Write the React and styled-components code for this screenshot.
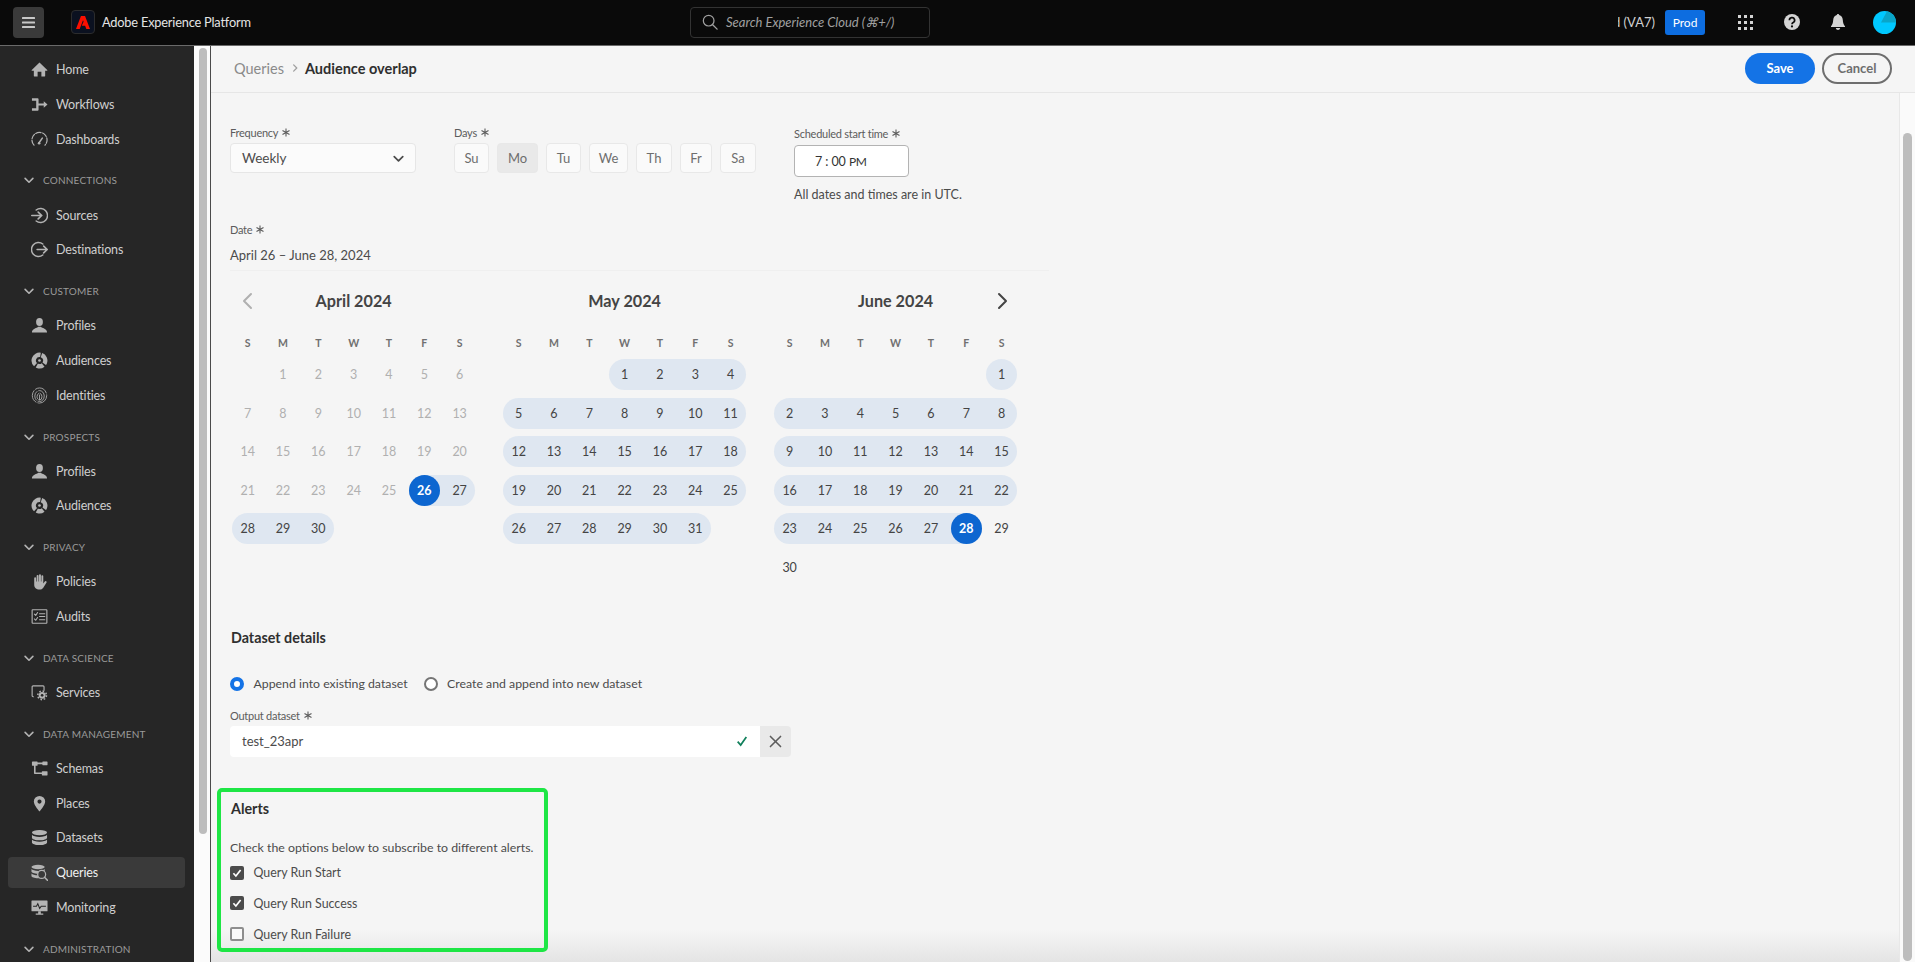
import React from 'react';
import styled, { createGlobalStyle } from 'styled-components';

const GlobalStyle = createGlobalStyle`
  html, body {
    margin: 0;
    padding: 0;
    background: #fff;
    overflow: hidden;
  }
  * { box-sizing: border-box; }
  body {
    font-family: "Lato", "Liberation Sans", sans-serif;
    color: #4b4b4b;
  }
`;

const Shell = styled.div`
  width: 1915px;
  height: 962px;
  display: flex;
  flex-direction: column;
  overflow: hidden;
`;

/* top bar */
const TopBar = styled.header`
  flex: 0 0 46px;
  display: grid;
  grid-template-columns: 690px 240px 1fr;
  align-items: center;
  background: #0a0a0a;
  border-bottom: 1px solid #6a6a6a;
  padding-bottom: 1px;
`;

const TopLeft = styled.div`
  display: flex;
  align-items: center;
  padding-left: 13px;
`;

const MenuButton = styled.div`
  width: 31px;
  height: 31px;
  border-radius: 4px;
  background: #3a3a3a;
  color: #c8c8c8;
  display: flex;
  align-items: center;
  justify-content: center;
`;

const LogoBox = styled.div`
  width: 24px;
  height: 24px;
  margin-left: 27px;
  border-radius: 4px;
  background: #0b1120;
  border: 1px solid #2c2c2c;
  display: flex;
  align-items: center;
  justify-content: center;
`;

const ProductName = styled.span`
  margin-left: 7px;
  font-size: 12.8px;
  letter-spacing: -0.2px;
  color: #e4e4e4;
`;

const SearchBox = styled.div`
  height: 31px;
  display: flex;
  align-items: center;
  gap: 8px;
  padding-left: 11px;
  border: 1px solid #333;
  border-radius: 4px;
  color: #a0a0a0;
  font-size: 13px;
  font-style: italic;
`;

const TopRight = styled.div`
  display: flex;
  align-items: center;
  justify-content: flex-end;
  padding-right: 19px;
  color: #d4d4d4;
`;

const OrgName = styled.span`
  width: 37px;
  display: flex;
  justify-content: flex-end;
  overflow: hidden;
  white-space: nowrap;
  font-size: 13px;
  color: #d0d0d0;
`;

const ProdBadge = styled.span`
  width: 40px;
  height: 25px;
  margin-left: 10px;
  margin-right: 33px;
  border-radius: 3px;
  background: #0d6de0;
  color: #fff;
  font-size: 12px;
  display: flex;
  align-items: center;
  justify-content: center;
`;

const TopIcon = styled.span`
  display: flex;
  margin-right: ${(p) => p.$gap}px;
`;

const Body = styled.div`
  flex: 1;
  display: flex;
  min-height: 0;
`;

/* left navigation */
const Sidebar = styled.nav`
  flex: 0 0 194px;
  display: flex;
  flex-direction: column;
  background: #262626;
  padding-top: 6.4px;
  overflow: hidden;
`;

const NavItem = styled.div`
  flex: 0 0 31px;
  margin: 1.83px 9px 1.82px 8px;
  padding-left: 23px;
  display: flex;
  align-items: center;
  gap: 8px;
  border-radius: 4px;
  font-size: 12.5px;
  letter-spacing: -0.15px;
  color: ${(p) => (p.$active ? '#f0f0f0' : '#cfcfcf')};
  background: ${(p) => (p.$active ? '#3a3a3a' : 'transparent')};
  svg { color: #b3b3b3; flex: none; }
`;

const NavSection = styled.div`
  flex: 0 0 34.65px;
  margin-top: 6.8px;
  padding-left: 24px;
  display: flex;
  align-items: center;
  gap: 9px;
  font-size: 10px;
  letter-spacing: 0.2px;
  text-transform: uppercase;
  color: #9a9a9a;
  svg { color: #b3b3b3; flex: none; }
`;

const NavRail = styled.div`
  flex: 0 0 16px;
  background: #fbfbfb;
  padding: 2px 3px 0 4.5px;
`;

const RailThumb = styled.div`
  height: 786px;
  border-radius: 4px;
  background: #bdbdbd;
`;

const Main = styled.main`
  flex: 1;
  position: relative;
  display: flex;
  flex-direction: column;
  min-width: 0;
  background: #f5f5f5;
  border-left: 1.5px solid #4a4a4a;
`;

const PageHeader = styled.div`
  flex: 0 0 47px;
  display: flex;
  align-items: center;
  padding: 0 23px 2px 23px;
  border-bottom: 1px solid #e6e6e6;
`;

const Crumb = styled.span`
  font-size: 14.5px;
  color: #8a8a8a;
`;

const CrumbArrow = styled.span`
  display: flex;
  color: #a0a0a0;
  margin: 0 6px 0 7px;
`;

const CrumbCurrent = styled.span`
  font-size: 14.5px;
  font-weight: 700;
  color: #2f2f2f;
`;

const HeaderActions = styled.div`
  margin-left: auto;
  display: flex;
  gap: 7px;
`;

const PillButton = styled.button`
  width: 70px;
  height: 31px;
  padding: 0;
  border-radius: 16px;
  font: 700 13px "Lato", "Liberation Sans", sans-serif;
  background: ${(p) => (p.$primary ? '#1473e6' : 'transparent')};
  color: ${(p) => (p.$primary ? '#fff' : '#6e6e6e')};
  border: ${(p) => (p.$primary ? 'none' : '2px solid #6e6e6e')};
`;

const ContentRow = styled.div`
  flex: 1;
  display: flex;
  min-height: 0;
`;

const Content = styled.div`
  flex: 1;
  padding: 32px 0 0 19px;
  min-width: 0;
`;

const ScrollTrack = styled.div`
  flex: 0 0 16px;
  background: #fafafa;
  border-left: 1px solid #e8e8e8;
  padding: 40px 3px 0 3px;
`;

const ScrollThumb = styled.div`
  height: 828px;
  border-radius: 5px;
  background: #bdbdbd;
`;

const BottomFade = styled.div`
  position: absolute;
  left: 0;
  right: 16px;
  bottom: 0;
  height: 32px;
  pointer-events: none;
  background: linear-gradient(to bottom, rgba(228, 228, 228, 0), #e4e4e4);
`;

/* form */
const ScheduleRow = styled.div`
  display: flex;
  height: 97px;
`;

const Field = styled.div`
  flex: 0 0 ${(p) => p.$width}px;
  padding-top: ${(p) => p.$top || 0}px;
`;

const FieldLabel = styled.div`
  height: ${(p) => p.$height || 18}px;
  display: flex;
  align-items: flex-start;
  gap: 4px;
  font-size: 11px;
  letter-spacing: -0.25px;
  line-height: 15px;
  color: #5c5c5c;
`;

const SelectBox = styled.div`
  width: 186px;
  height: 30px;
  padding: 0 11px;
  display: flex;
  align-items: center;
  justify-content: space-between;
  background: #fbfbfb;
  border: 1px solid #e6e6e6;
  border-radius: 4px;
  font-size: 13.5px;
  color: #4b4b4b;
`;

const DayChips = styled.div`
  display: flex;
  gap: 8px;
`;

const DayChip = styled.div`
  width: ${(p) => p.$width}px;
  height: 30px;
  display: flex;
  align-items: center;
  justify-content: center;
  border-radius: 4px;
  border: 1px solid #e8e8e8;
  font-size: 13px;
  color: #6e6e6e;
  background: ${(p) => (p.$selected ? '#e9e9e9' : '#fafafa')};
`;

const TimeBox = styled.div`
  width: 115px;
  height: 32px;
  padding-left: 20px;
  display: flex;
  align-items: center;
  gap: 3px;
  background: #fff;
  border: 1px solid #b3b3b3;
  border-radius: 4px;
  font-size: 12.5px;
  color: #333;
`;

const TimePeriod = styled.span`
  font-size: 12px;
  letter-spacing: -0.3px;
`;

const UtcNote = styled.div`
  margin-top: 9px;
  font-size: 12.5px;
  line-height: 18px;
  color: #4b4b4b;
`;

const DateValue = styled.div`
  width: 819px;
  height: 33px;
  padding-top: 7px;
  border-bottom: 1px solid #efefef;
  font-size: 13px;
  line-height: 20px;
  color: #4b4b4b;
`;

const Months = styled.div`
  display: flex;
  gap: 23.7px;
  margin-top: 16.5px;
`;

const Month = styled.div`
  width: 247.3px;
`;

const MonthHeader = styled.div`
  height: 26px;
  display: grid;
  grid-template-columns: 35.33px 1fr 35.33px;
  align-items: center;
  justify-items: center;
`;

const MonthTitle = styled.div`
  font-size: 16.2px;
  font-weight: 700;
  color: #444;
`;

const MonthArrow = styled.span`
  display: flex;
  color: ${(p) => (p.$muted ? '#b0b0b0' : '#444')};
`;

const Weekdays = styled.div`
  display: grid;
  grid-template-columns: repeat(7, 1fr);
  height: 16px;
  margin: 21.5px 0 8px;
  font-size: 10.5px;
  font-weight: 700;
  line-height: 16px;
  text-align: center;
  color: #707070;
`;

const DayGrid = styled.div`
  display: grid;
  grid-template-columns: repeat(7, 1fr);
  grid-auto-rows: 31px;
  row-gap: 7.5px;
  height: 223.5px;
`;

const Day = styled.div`
  grid-column: ${(p) => p.$col};
  display: flex;
  align-items: center;
  justify-content: center;
  font-size: 12.5px;
  color: ${(p) => (p.$disabled ? '#b0b0b0' : '#444')};
  background: ${(p) => (p.$inRange ? '#dfe7f1' : 'transparent')};
  margin-left: ${(p) => (p.$first ? 2.1 : 0)}px;
  margin-right: ${(p) => (p.$last ? 2.1 : 0)}px;
  padding-left: ${(p) => (p.$last && !p.$first ? 2.1 : 0)}px;
  padding-right: ${(p) => (p.$first && !p.$last ? 2.1 : 0)}px;
  border-radius: ${(p) => (p.$first ? '15.5px' : '0')} ${(p) => (p.$last ? '15.5px 15.5px' : '0 0')} ${(p) => (p.$first ? '15.5px' : '0')};
`;

const SelectedDay = styled.span`
  width: 31px;
  height: 31px;
  border-radius: 50%;
  background: #0d66d0;
  color: #fff;
  display: flex;
  align-items: center;
  justify-content: center;
  font-weight: 700;
`;

const SectionTitle = styled.div`
  font-size: 14.3px;
  font-weight: 700;
  line-height: 20px;
  padding-left: 1px;
  color: #2f2f2f;
`;

const DatasetTitle = styled(SectionTitle)`
  margin-top: 45px;
`;

const RadioRow = styled.div`
  display: flex;
  align-items: center;
  height: 20px;
  margin-top: 26px;
  margin-bottom: 14px;
  font-size: 12.3px;
  color: #4b4b4b;
`;

const RadioDot = styled.span`
  width: 14px;
  height: 14px;
  margin-right: 9.5px;
  border-radius: 50%;
  background: #fff;
  border: ${(p) => (p.$on ? '4.5px solid #1473e6' : '2px solid #757575')};
`;

const RadioText = styled.span`
  margin-right: 16px;
`;

const InputRow = styled.div`
  display: flex;
  width: 561px;
  height: 31px;
  border-radius: 4px;
  overflow: hidden;
`;

const TextInput = styled.div`
  flex: 1;
  display: flex;
  align-items: center;
  justify-content: space-between;
  padding: 0 12px;
  background: #fff;
  font-size: 13px;
  color: #4b4b4b;
`;

const ClearButton = styled.div`
  flex: 0 0 31px;
  display: flex;
  align-items: center;
  justify-content: center;
  background: #e9e9e9;
  color: #5c5c5c;
`;

const AlertsBox = styled.section`
  position: relative;
  z-index: 1;
  width: 331px;
  height: 164px;
  margin: 31px 0 0 -13px;
  padding: 7.5px 0 0 9px;
  border: 4px solid #1ee645;
  border-radius: 5px;
`;

const AlertsHint = styled.div`
  margin: 18.5px 0 5px;
  font-size: 12.35px;
  line-height: 20px;
  color: #4b4b4b;
`;

const CheckRow = styled.div`
  display: flex;
  align-items: center;
  gap: 9.5px;
  height: 20px;
  margin-bottom: 10.9px;
  font-size: 12.4px;
  color: #4b4b4b;
`;

const CheckBox = styled.span`
  width: 14px;
  height: 14px;
  border-radius: 2px;
  display: flex;
  align-items: center;
  justify-content: center;
  color: #fff;
  background: ${(p) => (p.$on ? '#4b4b4b' : '#fafafa')};
  border: ${(p) => (p.$on ? 'none' : '2px solid #8e8e8e')};
`;

/* icons */
const Svg = ({ size = 17, children, ...rest }) => (
  <svg width={size} height={size} viewBox="0 0 18 18" fill="currentColor" {...rest}>
    {children}
  </svg>
);

const strokeProps = { fill: 'none', stroke: 'currentColor', strokeLinecap: 'round', strokeLinejoin: 'round' };

const HomeIcon = () => (
  <Svg><path d="M9 1.6 17.2 9.6c.3.3.1.8-.3.8H15v5.6a.5.5 0 0 1-.5.5H11v-5H7v5H3.5a.5.5 0 0 1-.5-.5v-5.6H1.1c-.4 0-.6-.5-.3-.8z" /></Svg>
);
const WorkflowIcon = () => (
  <Svg><path d="M1 2.5h6a1 1 0 0 1 1 1V8h5.5V5.5L17.5 9l-4 3.5V10H8v4.5a1 1 0 0 1-1 1H1V13h4.5V5H1z" /></Svg>
);
const GaugeIcon = () => (
  <Svg>
    <path d="M3.2 15A8 8 0 1 1 14.8 15" {...strokeProps} strokeWidth="1.3" strokeDasharray="5.5 1.6" />
    <path d="M8.5 12.5 12 7.5" {...strokeProps} strokeWidth="1.6" />
    <circle cx="8.6" cy="13" r="1.4" />
  </Svg>
);
const SourceIcon = () => (
  <Svg>
    <path d="M5.5 3.2A7.4 7.4 0 1 1 5.5 14.8" {...strokeProps} strokeWidth="1.6" />
    <path d="M.8 9H11M7.6 5.4 11.4 9 7.6 12.6" {...strokeProps} strokeWidth="1.7" />
  </Svg>
);
const DestinationIcon = () => (
  <Svg>
    <path d="M12.5 3.2A7.4 7.4 0 1 0 12.5 14.8" {...strokeProps} strokeWidth="1.6" />
    <path d="M6.5 9H17M13.4 5.4 17.2 9 13.4 12.6" {...strokeProps} strokeWidth="1.7" />
  </Svg>
);
const ProfileIcon = () => (
  <Svg>
    <ellipse cx="9" cy="5.2" rx="3.6" ry="4.2" />
    <path d="M1 16.5c0-3 2.5-4 5-5 1-.4 1.4-.8 1.6-1.2h2.8c.2.4.6.8 1.6 1.2 2.5 1 5 2 5 5z" />
  </Svg>
);
const AudienceIcon = () => (
  <Svg>
    <circle cx="9" cy="9" r="6.1" fill="none" stroke="currentColor" strokeWidth="4.6" strokeDasharray="11 1.6 7 1.6 15 1.5" transform="rotate(-70 9 9)" />
    <circle cx="9" cy="9" r="1.4" />
  </Svg>
);
const FingerprintIcon = () => (
  <Svg>
    <g {...strokeProps} strokeWidth="0.9">
      <ellipse cx="9" cy="9" rx="7.6" ry="8" strokeDasharray="14 2" />
      <ellipse cx="9" cy="9.6" rx="5" ry="5.8" strokeDasharray="10 2" />
      <ellipse cx="9" cy="10.2" rx="2.6" ry="3.6" strokeDasharray="6 1.5" />
      <path d="M9 8.5v5" />
    </g>
  </Svg>
);
const HandIcon = () => (
  <Svg><path d="M3.4 5.5a1 1 0 0 1 2 0V9H6V3a1 1 0 0 1 2 0v6h.5V2.2a1 1 0 0 1 2 0V9h.5V3.500a1 1 0 0 1 2 0V11l1.6-2a1.1 1.1 0 0 1 1.7 1.4L13 15.500c-1 1.3-2.2 2-3.8 2-3.7 0-5.800-2-5.800-5z" /></Svg>
);
const AuditIcon = () => (
  <Svg>
    <rect x="1.2" y="1.8" width="15.6" height="14.4" rx="0.6" {...strokeProps} strokeWidth="1.2" />
    <path d="M3.6 6.4 5 7.8 7 4.8M3.6 11.6 5 13 7 10M9 6h5.6M9 9h5.6M9 12.4h5.6" {...strokeProps} strokeWidth="1.1" />
  </Svg>
);
const ServiceIcon = () => (
  <Svg>
    <path d="M2.5 13.5h-.3a1 1 0 0 1-1-1V3a1 1 0 0 1 1-1h10.6a1 1 0 0 1 1 1v3.5" {...strokeProps} strokeWidth="1.2" />
    <circle cx="11.8" cy="12" r="3.6" />
    <circle cx="11.8" cy="12" r="4.6" fill="none" stroke="currentColor" strokeWidth="1.6" strokeDasharray="1.7 1.9" />
    <circle cx="11.8" cy="12" r="1.4" fill="#262626" />
  </Svg>
);
const SchemaIcon = () => (
  <Svg>
    <rect x="1" y="1.5" width="6" height="4.5" rx="0.5" />
    <rect x="12" y="1.5" width="5.500" height="4" rx="0.5" />
    <rect x="11.5" y="12" width="6" height="4.5" rx="0.5" />
    <path d="M7 3.6h5M4 6v8h8" {...strokeProps} strokeWidth="1.7" />
  </Svg>
);
const PinIcon = () => (
  <Svg><path fillRule="evenodd" d="M9 1a6 6 0 0 0-6 6c0 4 6 10.5 6 10.5S15 11 15 7a6 6 0 0 0-6-6zm0 8.2A2.2 2.2 0 1 1 9 4.8a2.2 2.2 0 0 1 0 4.4z" /></Svg>
);
const DatasetIcon = () => (
  <Svg>
    <ellipse cx="9" cy="3.8" rx="8" ry="2.8" />
    <path d="M1 6.2v3c0 1.5 3.6 2.8 8 2.8s8-1.3 8-2.8v-3c-1 1.4-4.3 2.3-8 2.3S2 7.6 1 6.2z" />
    <path d="M1 11.2v3c0 1.5 3.6 2.8 8 2.8s8-1.3 8-2.8v-3c-1 1.4-4.3 2.3-8 2.3s-7-.9-8-2.3z" />
  </Svg>
);
const QueryIcon = () => (
  <Svg>
    <ellipse cx="7.5" cy="3.2" rx="7" ry="2.4" />
    <path d="M.5 5.4v2.6c0 1.3 3.1 2.4 7 2.4s7-1.1 7-2.4V5.4c-.9 1.2-3.8 2-7 2s-6.1-.8-7-2z" />
    <path d="M.5 10v2.6c0 1.3 3.1 2.4 7 2.4s7-1.1 7-2.4V10c-.9 1.2-3.8 2-7 2s-6.1-.8-7-2z" />
    <circle cx="11.3" cy="11" r="4.2" fill="#3a3a3a" stroke="currentColor" strokeWidth="1.3" />
    <path d="M14.3 14 17.6 17.4" {...strokeProps} strokeWidth="1.6" />
  </Svg>
);
const MonitorIcon = () => (
  <Svg>
    <rect x="0.5" y="1.5" width="17" height="11.5" rx="0.6" />
    <path d="M2.2 7.6h3.6l1.4-2.6 2 5 1.6-2.4h5" fill="none" stroke="#262626" strokeWidth="1.1" />
    <path d="M7.6 13h2.8v2.4h2.6v1.4H5v-1.4h2.6z" />
  </Svg>
);

const Chevron = ({ size = 10, width = 1.8, dir = 'down' }) => {
  const paths = { down: 'M2 6 9 13 16 6', left: 'M12 2 5 9 12 16', right: 'M6 2 13 9 6 16' };
  return (
    <Svg size={size}><path d={paths[dir]} {...strokeProps} strokeWidth={width * (18 / size)} /></Svg>
  );
};

const RequiredMark = () => (
  <svg width="8" height="9" viewBox="0 0 8 9" style={{ marginTop: 3 }}>
    <path d="M4 .5v8M.5 2.5l7 4M7.5 2.500l-7 4" stroke="#5c5c5c" strokeWidth="1.1" fill="none" />
  </svg>
);

const AdobeMark = () => (
  <svg width="14" height="13" viewBox="0 0 24 22" fill="#fa0f00">
    <path d="M8.500 0H15.500L24 22H17.700L15.600 16.600H9.800L13 9.500 12 7 6.300 22H0z" />
  </svg>
);

const NAV = [
  { label: 'Home', icon: HomeIcon },
  { label: 'Workflows', icon: WorkflowIcon },
  { label: 'Dashboards', icon: GaugeIcon },
  { section: 'Connections' },
  { label: 'Sources', icon: SourceIcon },
  { label: 'Destinations', icon: DestinationIcon },
  { section: 'Customer' },
  { label: 'Profiles', icon: ProfileIcon },
  { label: 'Audiences', icon: AudienceIcon },
  { label: 'Identities', icon: FingerprintIcon },
  { section: 'Prospects' },
  { label: 'Profiles', icon: ProfileIcon },
  { label: 'Audiences', icon: AudienceIcon },
  { section: 'Privacy' },
  { label: 'Policies', icon: HandIcon },
  { label: 'Audits', icon: AuditIcon },
  { section: 'Data science' },
  { label: 'Services', icon: ServiceIcon },
  { section: 'Data management' },
  { label: 'Schemas', icon: SchemaIcon },
  { label: 'Places', icon: PinIcon },
  { label: 'Datasets', icon: DatasetIcon },
  { label: 'Queries', icon: QueryIcon, active: true },
  { label: 'Monitoring', icon: MonitorIcon },
  { section: 'Administration' },
];

const WEEK = ['S', 'M', 'T', 'W', 'T', 'F', 'S'];

const DAY_CHIPS = [
  ['Su', 35], ['Mo', 41], ['Tu', 35], ['We', 39], ['Th', 36], ['Fr', 32], ['Sa', 36],
];

// offset = weekday of the 1st; rangeFrom/rangeTo bound the selected dates in that month
const MONTHS = [
  { title: 'April 2024', days: 30, offset: 1, rangeFrom: 26, rangeTo: 30, selected: 26 },
  { title: 'May 2024', days: 31, offset: 3, rangeFrom: 1, rangeTo: 31 },
  { title: 'June 2024', days: 30, offset: 6, rangeFrom: 1, rangeTo: 28, selected: 28 },
];

const MonthView = ({ month, index }) => {
  const cells = [];
  for (let d = 1; d <= month.days; d++) {
    const col = (month.offset + d - 1) % 7;
    const inRange = d >= month.rangeFrom && d <= month.rangeTo;
    cells.push(
      <Day
        key={d}
        $col={col + 1}
        $inRange={inRange}
        $disabled={d < month.rangeFrom}
        $first={inRange && (col === 0 || d === month.rangeFrom)}
        $last={inRange && (col === 6 || d === month.rangeTo)}
      >
        {d === month.selected ? <SelectedDay>{d}</SelectedDay> : d}
      </Day>
    );
  }
  return (
    <Month>
      <MonthHeader>
        <MonthArrow $muted>{index === 0 && <Chevron size={18} width={2} dir="left" />}</MonthArrow>
        <MonthTitle>{month.title}</MonthTitle>
        <MonthArrow>{index === 2 && <Chevron size={18} width={2} dir="right" />}</MonthArrow>
      </MonthHeader>
      <Weekdays>
        {WEEK.map((w, i) => <span key={i}>{w}</span>)}
      </Weekdays>
      <DayGrid>{cells}</DayGrid>
    </Month>
  );
};

const App = () => (
  <Shell>
    <GlobalStyle />
    <TopBar>
      <TopLeft>
        <MenuButton>
          <svg width="13" height="11" viewBox="0 0 13 11" fill="currentColor">
            <rect width="13" height="2" rx="0.5" />
            <rect y="4.5" width="13" height="2" rx="0.5" />
            <rect y="9" width="13" height="2" rx="0.5" />
          </svg>
        </MenuButton>
        <LogoBox><AdobeMark /></LogoBox>
        <ProductName>Adobe Experience Platform</ProductName>
      </TopLeft>
      <SearchBox>
        <Svg size={16}>
          <circle cx="7.5" cy="7.5" r="6" {...strokeProps} strokeWidth="1.4" />
          <path d="M12 12 17 17" {...strokeProps} strokeWidth="1.5" />
        </Svg>
        Search Experience Cloud (⌘+/)
      </SearchBox>
      <TopRight>
        <OrgName>d (VA7)</OrgName>
        <ProdBadge>Prod</ProdBadge>
        <TopIcon $gap={31}>
          <svg width="15" height="15" viewBox="0 0 15 15" fill="currentColor">
            {[0, 6, 12].map((y) => [0, 6, 12].map((x) => (
              <rect key={`${x}-${y}`} x={x} y={y} width="3" height="3" />
            )))}
          </svg>
        </TopIcon>
        <TopIcon $gap={31}>
          <svg width="16" height="16" viewBox="0 0 16 16">
            <circle cx="8" cy="8" r="8" fill="currentColor" />
            <path d="M5.4 6.2a2.6 2.6 0 1 1 3.8 2.3c-.8.4-1.2.9-1.2 1.7" fill="none" stroke="#0a0a0a" strokeWidth="1.7" />
            <circle cx="8" cy="12.4" r="1.1" fill="#0a0a0a" />
          </svg>
        </TopIcon>
        <TopIcon $gap={28}>
          <svg width="14" height="16" viewBox="0 0 14 16" fill="currentColor">
            <path d="M7 0c.7 0 1.1.5 1.2 1.1C10.500 1.700 11.600 3.600 11.800 6c.2 3 .7 4.400 2.200 6.200v.8H0v-.8C1.500 10.400 2 9 2.200 6c.2-2.400 1.300-4.300 3.600-4.900C5.900.5 6.300 0 7 0z" />
            <path d="M4.800 14h4.400C9 15.200 8.100 16 7 16s-2-.8-2.200-2z" />
          </svg>
        </TopIcon>
        <svg width="23" height="23" viewBox="0 0 23 23">
          <circle cx="11.5" cy="11.500" r="11.500" fill="#00c8ff" />
          <path d="M14 .3A11.500 11.500 0 0 1 23 11.500H8z" fill="#0aa5c8" />
        </svg>
      </TopRight>
    </TopBar>
    <Body>
      <Sidebar>
        {NAV.map((item, i) => {
          if (item.section) {
            return (
              <NavSection key={i}>
                <Chevron size={10} width={1.6} />
                {item.section}
              </NavSection>
            );
          }
          const Icon = item.icon;
          return (
            <NavItem key={i} $active={item.active}>
              <Icon />
              {item.label}
            </NavItem>
          );
        })}
      </Sidebar>
      <NavRail><RailThumb /></NavRail>
      <Main>
        <PageHeader>
          <Crumb>Queries</Crumb>
          <CrumbArrow><Chevron size={8} width={1.3} dir="right" /></CrumbArrow>
          <CrumbCurrent>Audience overlap</CrumbCurrent>
          <HeaderActions>
            <PillButton $primary>Save</PillButton>
            <PillButton>Cancel</PillButton>
          </HeaderActions>
        </PageHeader>
        <ContentRow>
          <Content>
            <ScheduleRow>
              <Field $width={224}>
                <FieldLabel>Frequency <RequiredMark /></FieldLabel>
                <SelectBox>
                  Weekly
                  <Chevron size={11} width={1.7} />
                </SelectBox>
              </Field>
              <Field $width={340}>
                <FieldLabel>Days <RequiredMark /></FieldLabel>
                <DayChips>
                  {DAY_CHIPS.map(([name, width]) => (
                    <DayChip key={name} $width={width} $selected={name === 'Mo'}>{name}</DayChip>
                  ))}
                </DayChips>
              </Field>
              <Field $width={300} $top={1}>
                <FieldLabel $height={19}>Scheduled start time <RequiredMark /></FieldLabel>
                <TimeBox>
                  <span>7</span><span>:</span><span>00</span>
                  <TimePeriod>PM</TimePeriod>
                </TimeBox>
                <UtcNote>All dates and times are in UTC.</UtcNote>
              </Field>
            </ScheduleRow>
            <FieldLabel $height={16}>Date <RequiredMark /></FieldLabel>
            <DateValue>April 26 – June 28, 2024</DateValue>
            <Months>
              {MONTHS.map((m, i) => <MonthView key={m.title} month={m} index={i} />)}
            </Months>
            <DatasetTitle>Dataset details</DatasetTitle>
            <RadioRow>
              <RadioDot $on />
              <RadioText>Append into existing dataset</RadioText>
              <RadioDot />
              <RadioText>Create and append into new dataset</RadioText>
            </RadioRow>
            <FieldLabel>Output dataset <RequiredMark /></FieldLabel>
            <InputRow>
              <TextInput>
                test_23apr
                <Svg size={12}><path d="M2.500 10 7 15 15.500 3" fill="none" stroke="#12805c" strokeWidth="2.600" /></Svg>
              </TextInput>
              <ClearButton>
                <Svg size={13}><path d="M2 2 16 16M16 2 2 16" {...strokeProps} strokeWidth="2.200" /></Svg>
              </ClearButton>
            </InputRow>
            <AlertsBox>
              <SectionTitle>Alerts</SectionTitle>
              <AlertsHint>Check the options below to subscribe to different alerts.</AlertsHint>
              {[['Query Run Start', true], ['Query Run Success', true], ['Query Run Failure', false]].map(([label, on]) => (
                <CheckRow key={label}>
                  <CheckBox $on={on}>
                    {on && <Svg size={10}><path d="M2.500 9.500 7 14.500 15.500 3.500" fill="none" stroke="currentColor" strokeWidth="3" /></Svg>}
                  </CheckBox>
                  {label}
                </CheckRow>
              ))}
            </AlertsBox>
          </Content>
          <ScrollTrack><ScrollThumb /></ScrollTrack>
        </ContentRow>
        <BottomFade />
      </Main>
    </Body>
  </Shell>
);

export default App;
